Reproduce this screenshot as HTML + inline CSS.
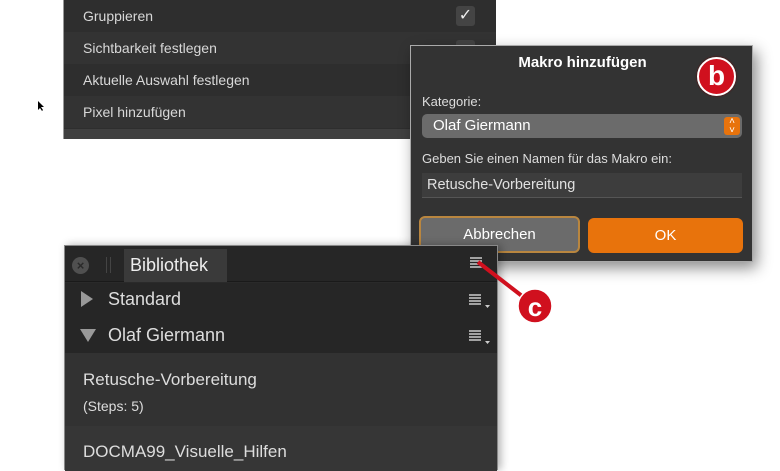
<!DOCTYPE html>
<html><head><meta charset="utf-8"><style>
*{margin:0;padding:0;box-sizing:border-box}
body{width:780px;height:470px;background:#fff;position:relative;overflow:hidden;font-family:"Liberation Sans",sans-serif}
.abs{position:absolute}
.row{position:absolute;left:0;width:432px;height:32px;color:#d8d8d8;font-size:14px;padding-left:19px;line-height:32px}
</style></head><body>
<!-- top menu panel -->
<div class="abs" style="left:63px;top:0;width:432px;height:139px;background:#2e2e2e;border:1px solid #999;border-top:none;">
 <div class="row" style="top:0;background:#2e2e2e">Gruppieren</div>
 <div class="row" style="top:32px;background:#333">Sichtbarkeit festlegen</div>
 <div class="row" style="top:64px;background:#2e2e2e">Aktuelle Auswahl festlegen</div>
 <div class="row" style="top:96px;background:#333">Pixel hinzufügen</div>
 <div class="abs" style="left:0;top:129px;width:432px;height:10px;background:#404040"></div>
 <div class="abs" style="left:392px;top:6px;width:19px;height:20px;background:#444;border-radius:3px;color:#eee;font-size:16px;text-align:center;line-height:20px">✓</div>
 <div class="abs" style="left:392px;top:40px;width:19px;height:12px;background:#444;border-radius:3px"></div>
</div>
<!-- cursor -->
<svg class="abs" style="left:37px;top:100px" width="8" height="12"><path d="M1 1 L1 10 L3 8 L5 11 L6 10 L4 7 L7 7 Z" fill="#000"/></svg>
<!-- dialog -->
<div class="abs" style="left:410px;top:45px;width:343px;height:217px;background:#333;border:1px solid #aaa;box-shadow:4px 6px 14px rgba(0,0,0,.45)">
 <div class="abs" style="left:0;top:8px;width:343px;text-align:center;color:#fff;font-weight:bold;font-size:15px">Makro hinzufügen</div>
 <div class="abs" style="left:11px;top:48px;color:#ddd;font-size:13px">Kategorie:</div>
 <div class="abs" style="left:11px;top:68px;width:320px;height:24px;background:#6b6b6b;border-radius:5px;color:#fff;font-size:15px;line-height:24px;padding-left:11px">Olaf Giermann</div>
 <div class="abs" style="left:313px;top:71px;width:16px;height:18px;background:#e8730c;border-radius:3px;color:#fff;font-size:10px;text-align:center;line-height:9px">˄<br>˅</div>
 <div class="abs" style="left:11px;top:105px;color:#ddd;font-size:13px">Geben Sie einen Namen für das Makro ein:</div>
 <div class="abs" style="left:11px;top:127px;width:320px;height:25px;background:#3d3d3d;border-bottom:1px solid #555;color:#e0e0e0;font-size:14.5px;line-height:25px;padding-left:5px">Retusche-Vorbereitung</div>
 <div class="abs" style="left:8px;top:170px;width:161px;height:37px;background:#6b6b6b;border:2px solid #b9863f;border-radius:6px;color:#fff;font-size:15px;text-align:center;line-height:33px">Abbrechen</div>
 <div class="abs" style="left:177px;top:172px;width:155px;height:35px;background:#e8730c;border-radius:6px;color:#fff;font-size:15px;text-align:center;line-height:35px">OK</div>
</div>
<div class="abs" style="left:697px;top:57px;width:39px;height:39px;border-radius:50%;background:#d0101e;border:2px solid #fff;box-shadow:0 0 2px #600;color:#fff;font-weight:bold;font-size:28px;text-align:center;line-height:33px">b</div>
<!-- library panel -->
<div class="abs" style="left:64px;top:245px;width:434px;height:225px;background:#2a2a2a;border:1px solid #888;border-bottom:none;box-shadow:3px 0 8px rgba(0,0,0,.3)">
 <div class="abs" style="left:0;top:0;width:432px;height:36px;background:#262626;border-bottom:1px solid #1a1a1a"></div>
 <div class="abs" style="left:7px;top:11px;width:17px;height:17px;border-radius:50%;background:#505050;color:#2a2a2a;font-size:13px;text-align:center;line-height:17px;font-weight:bold">×</div>
 <div class="abs" style="left:41px;top:11px;width:5px;height:16px;border-left:1px solid #444;border-right:1px solid #444"></div>
 <div class="abs" style="left:59px;top:3px;width:103px;height:33px;background:#3a3a3a;color:#eee;font-size:18px;line-height:33px;padding-left:6px">Bibliothek</div>
 <div class="abs" style="left:0;top:37px;width:432px;height:70px;background:#262626"></div>
 <div class="abs" style="left:16px;top:45px;width:0;height:0;border-left:12px solid #999;border-top:8px solid transparent;border-bottom:8px solid transparent"></div>
 <div class="abs" style="left:43px;top:43px;color:#ddd;font-size:18px">Standard</div>
 <div class="abs" style="left:15px;top:83px;width:0;height:0;border-top:13px solid #999;border-left:8px solid transparent;border-right:8px solid transparent"></div>
 <div class="abs" style="left:43px;top:79px;color:#ddd;font-size:18px">Olaf Giermann</div>
 <div class="abs" style="left:0;top:107px;width:432px;height:73px;background:#323232"></div>
 <div class="abs" style="left:18px;top:124px;color:#ddd;font-size:17px">Retusche-Vorbereitung</div>
 <div class="abs" style="left:18px;top:152px;color:#ddd;font-size:14px">(Steps: 5)</div>
 <div class="abs" style="left:0;top:180px;width:432px;height:45px;background:#363636"></div>
 <div class="abs" style="left:18px;top:196px;color:#ddd;font-size:17px">DOCMA99_Visuelle_Hilfen</div>
</div>
<svg class="abs" style="left:0;top:0" width="780" height="470">
 <g stroke="#ccc" stroke-width="1.6">
  <path d="M470 258h12M470 261h12M470 264h12M470 267h12"/>
  <path d="M469 295h12M469 298h12M469 301h12M469 304h12"/>
  <path d="M469 331h12M469 334h12M469 337h12M469 340h12"/>
 </g>
 <path d="M485 305l5 0l-2.5 3z M485 341l5 0l-2.5 3z" fill="#ccc"/>
 <line x1="478" y1="262" x2="522" y2="296" stroke="#d0101e" stroke-width="4"/>
 <circle cx="535" cy="306" r="17" fill="#d0101e" stroke="#fff" stroke-width="1.5"/>
 <text x="535" y="316" fill="#fff" font-family="Liberation Sans" font-weight="bold" font-size="26" text-anchor="middle">c</text>
</svg>
</body></html>
